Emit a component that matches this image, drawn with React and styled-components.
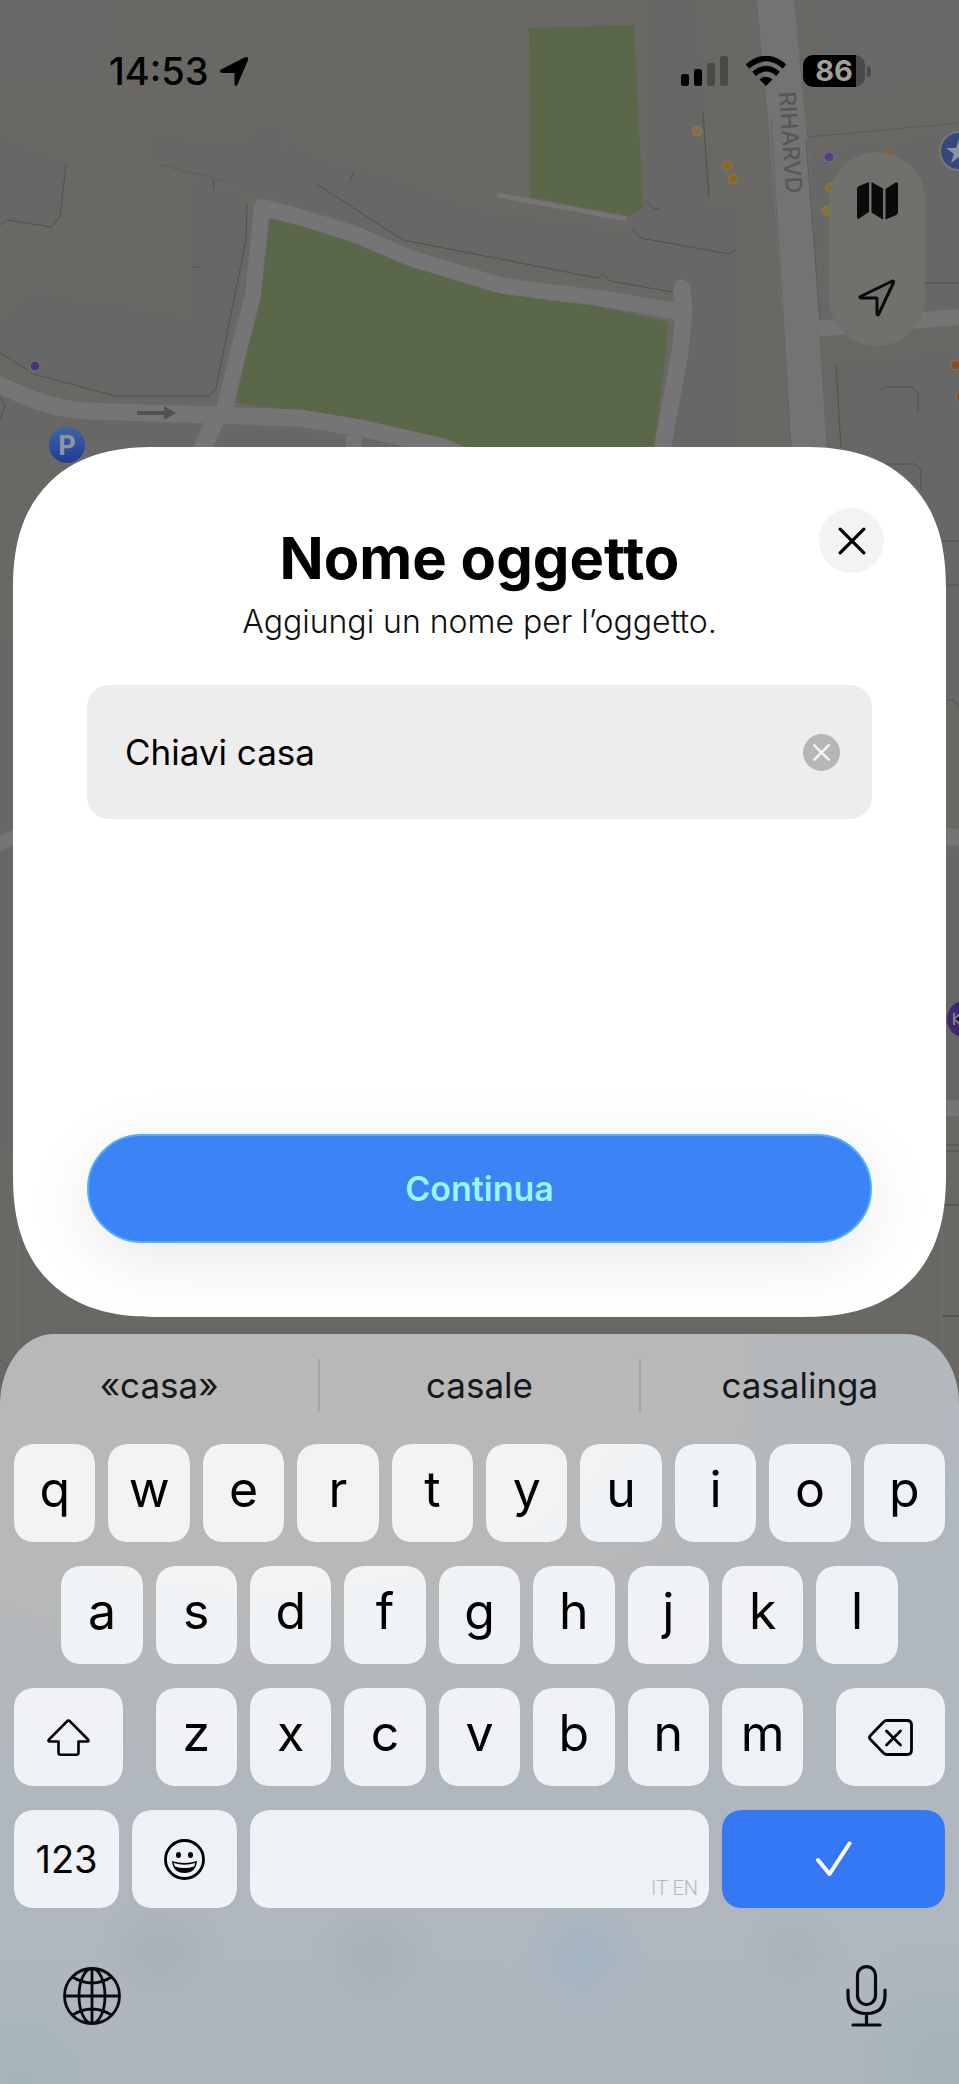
import React, { Component } from 'react';
import styled, { createGlobalStyle } from 'styled-components';

const GlobalStyle = createGlobalStyle`
  * {
    box-sizing: border-box;
  }
  body {
    margin: 0;
    background: #6a6865;
    font-family: Inter, "Liberation Sans", sans-serif;
    color: #000;
  }
  button {
    border: 0;
    padding: 0;
    background: none;
    color: inherit;
    font: inherit;
    cursor: pointer;
  }
  svg {
    display: block;
  }
`;

const Screen = styled.div`
  position: relative;
  min-height: 100vh;
  display: flex;
  flex-direction: column;
  overflow: hidden;
`;

const MapLayer = styled.svg`
  position: absolute;
  top: 0;
  left: 0;
  width: 100%;
  height: 100%;
`;

const StatusBar = styled.header`
  position: relative;
  height: 142px;
  padding: 0 88px 0 109px;
  display: flex;
  align-items: center;
  justify-content: space-between;
`;

const StatusGroup = styled.div`
  display: flex;
  align-items: center;
  gap: ${props => props.gap};
`;

const Time = styled.time`
  font-size: 38px;
  font-weight: 500;
`;

const Battery = styled.div`
  display: flex;
  align-items: center;
  gap: 2px;
`;

const BatteryBody = styled.div`
  width: 62px;
  height: 32px;
  border-radius: 10px;
  background: linear-gradient(to right, #000 86%, #4a4948 86%);
  color: #a09f9d;
  font-size: 29px;
  font-weight: 700;
  line-height: 32px;
  text-align: center;
`;

const BatteryNub = styled.div`
  width: 4px;
  height: 11px;
  border-radius: 0 4px 4px 0;
  background: #4a4948;
`;

const MapControls = styled.nav`
  position: relative;
  align-self: flex-end;
  width: 96px;
  height: 194px;
  margin: 10px 34px 0 0;
  border-radius: 48px;
  background: #72706d;
  display: flex;
  flex-direction: column;
`;

const MapButton = styled.button`
  flex: 1;
  display: flex;
  align-items: center;
  justify-content: center;
`;

const Sheet = styled.main`
  position: relative;
  margin: 101px 13px 17px;
  padding: 61px 0 74px;
  border-radius: 124px;
  background: #fff;
  overflow: hidden;

  @supports (corner-shape: squircle) {
    border-radius: 142px;
    corner-shape: superellipse(1.25);
  }
`;

const SheetHeader = styled.div`
  padding: 0 62px;
  display: grid;
  grid-template-columns: 65px 1fr 65px;
  align-items: start;
`;

const Heading = styled.div`
  grid-column: 2;
  padding-top: 15px;
  text-align: center;
`;

const Title = styled.h1`
  margin: 0;
  font-size: 58px;
  font-weight: 700;
  line-height: 70px;
`;

const Subtitle = styled.p`
  margin: 9px 0 0;
  font-size: 32px;
  font-weight: 300;
  line-height: 40px;
  color: #111;
`;

const CloseButton = styled.button`
  width: 65px;
  height: 65px;
  border-radius: 50%;
  background: #f3f3f3;
  display: flex;
  align-items: center;
  justify-content: center;
`;

const Form = styled.form`
  margin: 43px 74px 0;
  display: flex;
  flex-direction: column;
  gap: 315px;
`;

const Field = styled.div`
  height: 134px;
  padding: 0 32px 0 38px;
  border-radius: 22px;
  background: #ededed;
  display: flex;
  align-items: center;
  gap: 20px;
`;

const NameInput = styled.input`
  flex: 1;
  min-width: 0;
  border: 0;
  padding: 0;
  outline: 0;
  background: none;
  font-family: inherit;
  font-size: 35px;
  color: #000;
`;

const ClearButton = styled.button`
  width: 37px;
  height: 37px;
  border-radius: 50%;
  background: #b6b6b7;
  display: flex;
  align-items: center;
  justify-content: center;
`;

const ContinueButton = styled.button`
  height: 109px;
  border: 2px solid #52aefc;
  border-radius: 55px;
  background: #3c83f6;
  box-shadow: 0 16px 70px rgba(0, 0, 0, 0.09);
  color: #97f6fe;
  font-size: 34px;
  font-weight: 600;
`;

const Keyboard = styled.section`
  position: relative;
  flex: 1;
  border-radius: 54px 54px 0 0 / 70px 70px 0 0;
  background:
    radial-gradient(circle at 583px 625px, rgba(150, 178, 200, 0.5), transparent 60px),
    radial-gradient(circle at 160px 620px, rgba(160, 166, 177, 0.45), transparent 60px),
    radial-gradient(circle at 374px 625px, rgba(160, 166, 177, 0.45), transparent 60px),
    radial-gradient(circle at 793px 620px, rgba(163, 169, 180, 0.4), transparent 50px),
    radial-gradient(circle at 2% 100%, rgba(160, 180, 185, 0.8), transparent 110px),
    radial-gradient(circle at 98% 97%, rgba(160, 178, 184, 0.8), transparent 120px),
    radial-gradient(ellipse 720px 420px at 28% 6%, #b8b8b8 50%, transparent),
    linear-gradient(#b1b8bd, #b0b7bd 50%, #afb6c0);
`;

const Suggestions = styled.div`
  height: 110px;
  padding-bottom: 7px;
  display: flex;
  align-items: center;
`;

const Suggestion = styled.button`
  flex: 1;
  height: 53px;
  font-size: 35px;
  line-height: 53px;
  color: #17181a;

  & + & {
    border-left: 2px solid #a2a6a9;
  }
`;

const Keys = styled.div`
  padding: 0 14px;
  display: flex;
  flex-direction: column;
  gap: 24px;
`;

const KeyRow = styled.div`
  display: flex;
  justify-content: ${props => props.spread ? 'space-between' : 'center'};
  gap: 13px;
`;

const LetterGroup = styled.div`
  flex: 0 0 calc(70% - 4px);
  display: flex;
  gap: 13px;
`;

const Key = styled.button`
  height: 98px;
  border-radius: 18px;
  background: ${props => props.primary ? '#3478f6' : 'rgba(250, 253, 255, 0.85)'};
  font-size: 38px;
  display: flex;
  align-items: center;
  justify-content: center;
  flex: ${props => props.grow || '0 0 auto'};
  width: ${props => props.width || 'auto'};

  @supports (corner-shape: squircle) {
    border-radius: 22px;
    corner-shape: superellipse(1.25);
  }
`;

const LetterKey = styled(Key)`
  flex: ${props => props.grouped ? '1 1 0' : '0 0 calc((100% - 117px) / 10)'};
  padding-bottom: 8px;
  font-size: 50px;
`;

const SpaceKey = styled(Key)`
  align-items: flex-end;
  justify-content: flex-end;
  padding: 0 11px 8px;
  color: #b4b8bc;
  font-family: Roboto, sans-serif;
  font-size: 20px;
  font-weight: 300;
`;

const KeyboardFooter = styled.div`
  height: 175px;
  padding: 0 72px 0 63px;
  display: flex;
  align-items: center;
  justify-content: space-between;
`;

const suggestions = ['«casa»', 'casale', 'casalinga'];

const dots = [
  { x: 697, y: 131, color: '#8b6d42' },
  { x: 727, y: 166, color: '#8a6820' },
  { x: 733, y: 179, color: '#8a6820' },
  { x: 829, y: 157, color: '#563c8c' },
  { x: 830, y: 188, color: '#8a7422' },
  { x: 827, y: 211, color: '#8a7422' },
  { x: 888, y: 154, color: '#8a5a34' },
  { x: 956, y: 365, color: '#8a4d20' },
  { x: 961, y: 397, color: '#8a4d20' },
  { x: 35, y: 366, color: '#4c3278' },
];

const CityMap = () => (
  <MapLayer viewBox="0 0 959 2084" preserveAspectRatio="xMidYMin slice" aria-hidden="true">
    <defs>
      <linearGradient id="pin" x1="0" y1="0" x2="0" y2="1">
        <stop offset="0" stopColor="#3f66a8" />
        <stop offset="1" stopColor="#1f3a94" />
      </linearGradient>
      <filter id="soft" x="-10%" y="-10%" width="120%" height="120%">
        <feGaussianBlur stdDeviation="2" />
      </filter>
    </defs>
    <rect width="959" height="2084" fill="#6a6865" />

    {/* blocks */}
    <g fill="#676766">
      <path d="M0 0H128L112 14L108 76L0 82Z" filter="url(#soft)" />
      <path d="M0 136L66 160L58 220L52 227L7 220L0 225Z" />
      <path d="M0 318L30 290L192 316V178L248 197L246 245L235 315L216 388L210 397H115L45 378L0 352Z" />
      <path d="M150 135L245 142L258 128L286 130L283 165L275 195L263 198L150 160Z" />
      <path d="M290 140L320 160L355 165L480 210L700 240L738 260V290L733 298L670 292L480 258L405 240L300 205L275 195Z" />
      <path d="M645 0H700L709 200L699 208H655L646 200Z" />
      <path d="M632 222L640 205H736V250L730 254L640 238L632 232Z" />
      <path d="M689 290H740L742 447H664L682 370Z" />
      <path d="M818 0H959V84L828 95Z" filter="url(#soft)" />
      <path d="M812 150L959 132V306L822 319Z" />
      <path d="M836 362L959 350V700H841Z" />
      <path d="M0 400L110 424H208L196 447H0Z" />
      <path d="M228 426L300 430L344 440L346 447H215Z" />
      <path d="M0 635H30V830H0Z" />
      <path d="M0 850H30V1150H0Z" />
      <path d="M935 850H959V1100H935Z" />
    </g>

    {/* parks */}
    <g fill="#5a6749">
      <path d="M529 28L634 25L643 208L630 216L530 197Z" />
      <path d="M270 219L330 233L400 263L480 287L570 300L668 322L666 350L654 450H460L400 437L300 411L236 403L245 360L258 310Z" />
    </g>

    {/* roads */}
    <g fill="none" stroke="#757576" strokeLinejoin="round">
      <path d="M-5 383C30 399 50 408 85 411L215 415L300 418L360 428L440 446L480 462" strokeWidth="17" />
      <path d="M224 410L240 345L253 295L262 207L300 217L360 236L410 258L480 279C500 287 520 288 550 292L600 298L680 312" strokeWidth="16" />
      <path d="M682 288L684 310L680 352L662 450" strokeWidth="17" strokeLinecap="round" />
      <path d="M215 420L198 460" strokeWidth="18" />
      <path d="M354 436V450" strokeWidth="16" />
      <path d="M497 195L626 219" strokeWidth="5" />
      <path d="M815 329L959 317" strokeWidth="16" />
      <path d="M-4 845L22 834" strokeWidth="14" />
      <path d="M940 837H962" strokeWidth="17" />
      <path d="M940 1108H962" strokeWidth="16" />
    </g>
    <path d="M757 0H794L808 150L828 450H791L771 150Z" fill="#737373" />

    {/* kerbs and building edges */}
    <g fill="none" stroke="#525150" strokeWidth="1">
      <path d="M66 165L60 216L52 227L7 220L0 225" />
      <path d="M30 373L115 396H209L216 388L240 270L246 240L247 205" />
      <path d="M0 353L28 370" />
      <path d="M315 183L403 240L480 255L597 278L603 274L610 281L672 292" />
      <path d="M160 165L222 180" stroke="#5d5c5b" />
      <path d="M632 230L640 238L730 254L737 248" />
      <path d="M703 112L709 198M646 201L655 209H659" />
      <path d="M809 137L959 123M820 320L806 140" stroke="#5c5b5a" />
      <path d="M925 283H959M836 366L841 447M880 390L885 387H912L918 394V412" />
      <path d="M820 336L827 447M771 120L791 447" stroke="#646362" />
      <path d="M885 464H915L921 470V490M942 541H959" />
      <path d="M942 585H959M945 700H952L959 706M942 1145H959M942 1151H959M942 1205H959M942 1316H959" />
      <path d="M213 180L214 190M353 172L350 182M192 267H199" />
      <path d="M0 398L5 405L0 420" />
    </g>
    <path d="M137 411H164V406L176 413L164 420V415H137Z" fill="#525150" />
    <text transform="translate(779 92) rotate(86)" fontSize="23" fontWeight="500" fill="#585757" fontFamily="Inter, sans-serif">RIHARVD</text>

    {dots.map(dot => (
      <circle key={`${dot.x}-${dot.y}`} cx={dot.x} cy={dot.y} r="5" fill={dot.color} stroke="#7b7977" strokeWidth="1" />
    ))}
    <circle cx="67" cy="445" r="18" fill="url(#pin)" />
    <text x="67" y="455" fontSize="27" fontWeight="700" fill="#8f95a3" textAnchor="middle" fontFamily="Inter, sans-serif">P</text>
    <circle cx="959" cy="151" r="19" fill="#36477c" stroke="#777" strokeWidth="2" />
    <path d="M959 139L962 148H972L964 154L967 163L959 157L951 163L954 154L946 148H956Z" fill="#8e929c" />
    <circle cx="966" cy="1019" r="19" fill="#40286e" />
    <path d="M954 1013V1025M954 1019L960 1014V1024Z" stroke="#81799a" strokeWidth="2" />

    <rect x="18" y="1180" width="924" height="300" fill="#6a6865" stroke="#747371" />
    <path d="M0 1360L8 1367M942 1205H959M942 1316H959" stroke="#525150" />
  </MapLayer>
);

const LocationArrow = () => (
  <svg width="30" height="31" viewBox="0 0 30 31">
    <path d="M2 13.500L26 1.200Q30 0 29 4L18.500 28.500Q16.500 32 15.500 28V17H3.500Q-1 16 2 13.500Z" />
  </svg>
);

const Signal = () => (
  <svg width="48" height="30" viewBox="0 0 48 30">
    <rect x="0" y="18" width="8" height="12" rx="2.500" />
    <rect x="13" y="13" width="8" height="17" rx="2.500" />
    <rect x="26" y="7" width="8" height="23" rx="2.500" fill="#4a4948" />
    <rect x="39" y="0" width="8" height="30" rx="2.500" fill="#4a4948" />
  </svg>
);

const Wifi = () => (
  <svg width="42" height="30" viewBox="0 0 42 30">
    <path d="M2.500 10.500Q21 -5.500 39.500 10.500" fill="none" stroke="#000" strokeWidth="5.500" />
    <path d="M9 17.800Q21 7.500 33 17.800" fill="none" stroke="#000" strokeWidth="5.500" />
    <path d="M14.500 23.500Q21 18 27.500 23.500L21 30Z" />
  </svg>
);

const MapIcon = () => (
  <svg width="41" height="38" viewBox="0 0 41 38" fill="#0a0a0a">
    <path d="M0 7Q0 5 2 4L12 0V30L2 36.500Q0 38 0 35Z" />
    <path d="M14.500 0L26 6.500V37.500L14.500 30.500Z" />
    <path d="M28.500 7L38.500 0.500Q41 -0.500 41 2V30Q41 32 39.500 33L28.500 37.500Z" />
  </svg>
);

const NavigateIcon = () => (
  <svg width="38" height="38" viewBox="0 0 38 38" fill="none" stroke="#0a0a0a" strokeWidth="3" strokeLinejoin="round">
    <path d="M2.500 17.500L34.500 2Q36 2 35.500 3.500L20.500 35.500Q19.500 36.500 19 35V19.500Q19 19 18.500 19H3Q1 18.500 2.500 17.500Z" />
  </svg>
);

const Cross = ({ size, stroke, color }) => (
  <svg width={size} height={size} viewBox="0 0 26 26" fill="none" stroke={color} strokeWidth={stroke} strokeLinecap="round">
    <path d="M2 2L24 24M24 2L2 24" />
  </svg>
);

const ShiftIcon = () => (
  <svg width="43" height="37" viewBox="0 0 43 37" fill="none" stroke="#000" strokeWidth="2.600" strokeLinejoin="round">
    <path d="M20 2.300Q21.500 1 23 2.300L41 20.500Q42.500 22.500 40 22.500H31.500V33.500Q31.500 35.700 29.300 35.700H13.700Q11.500 35.700 11.500 33.500V22.500H3Q0.500 22.500 2 20.500Z" />
  </svg>
);

const DeleteIcon = () => (
  <svg width="45" height="37" viewBox="0 0 45 37" fill="none" stroke="#000" strokeWidth="2.800" strokeLinecap="round" strokeLinejoin="round">
    <path d="M15.500 3Q17 1.500 19 1.500H39Q43.500 1.500 43.500 6V31Q43.500 35.500 39 35.500H19Q17 35.500 15.500 34L2.500 20.500Q0.500 18.500 2.500 16.500Z" />
    <path d="M18.500 12L32.500 26M32.500 12L18.500 26" />
  </svg>
);

const SmileIcon = () => (
  <svg width="41" height="41" viewBox="0 0 41 41">
    <circle cx="20.500" cy="20.500" r="19" fill="none" stroke="#000" strokeWidth="2.800" />
    <ellipse cx="14.500" cy="16" rx="2.500" ry="3" />
    <ellipse cx="26.500" cy="16" rx="2.500" ry="3" />
    <path d="M8 22Q20.500 26 33 22Q32 34 20.500 34Q9 34 8 22Z" />
    <path d="M9.800 24Q20.500 27.300 31.200 24L30.200 27.500Q20.500 30.500 10.800 27.500Z" fill="#eff3f7" />
  </svg>
);

const CheckIcon = () => (
  <svg width="36" height="36" viewBox="0 0 36 36" fill="none" stroke="#fff" strokeWidth="4" strokeLinecap="round" strokeLinejoin="round">
    <path d="M2 19L13.500 33L33.500 2.500" />
  </svg>
);

const GlobeIcon = () => (
  <svg width="58" height="58" viewBox="0 0 58 58" fill="none" stroke="#0a0b0c" strokeWidth="2.800">
    <circle cx="29" cy="29" r="27.500" />
    <ellipse cx="29" cy="29" rx="13" ry="27.500" />
    <path d="M29 1.500V56.500M1.500 29H56.500M9.500 10Q29 22 48.500 10M9.500 48Q29 36 48.500 48" />
  </svg>
);

const MicIcon = () => (
  <svg width="41" height="62" viewBox="0 0 41 62" fill="none" stroke="#0a0b0c" strokeWidth="3.200" strokeLinecap="round">
    <rect x="11.500" y="1.600" width="18" height="38" rx="9" />
    <path d="M2 25V30Q2 48.500 20.500 48.500Q39 48.500 39 30V25M20.500 48.500V60M7 60H34" />
  </svg>
);

export default class App extends Component {

  state = { name: 'Chiavi casa' };

  onChangeHandler = (e) => {
    this.setState({ name: e.target.value });
  }

  onClearHandler = () => {
    this.setState({ name: '' });
  }

  onTypeHandler = (letter) => {
    this.setState(state => ({ name: state.name + letter }));
  }

  onDeleteHandler = () => {
    this.setState(state => ({ name: state.name.slice(0, -1) }));
  }

  renderLetters (letters, grouped) {
    return letters.split('').map(letter => (
      <LetterKey type="button" key={letter} grouped={grouped ? 1 : undefined} onClick={() => this.onTypeHandler(letter)}>
        {letter}
      </LetterKey>
    ));
  }

  render () {
    return (
      <Screen>
        <GlobalStyle />
        <CityMap />

        <StatusBar>
          <StatusGroup gap="10px">
            <Time>14:53</Time>
            <LocationArrow />
          </StatusGroup>
          <StatusGroup gap="16px">
            <Signal />
            <Wifi />
            <Battery>
              <BatteryBody>86</BatteryBody>
              <BatteryNub />
            </Battery>
          </StatusGroup>
        </StatusBar>

        <MapControls>
          <MapButton type="button" aria-label="Mappa"><MapIcon /></MapButton>
          <MapButton type="button" aria-label="Posizione"><NavigateIcon /></MapButton>
        </MapControls>

        <Sheet>
          <SheetHeader>
            <Heading>
              <Title>Nome oggetto</Title>
              <Subtitle id="name-label">Aggiungi un nome per l’oggetto.</Subtitle>
            </Heading>
            <CloseButton type="button" aria-label="Chiudi">
              <Cross size="28" stroke="3" color="#000" />
            </CloseButton>
          </SheetHeader>
          <Form onSubmit={e => e.preventDefault()}>
            <Field>
              <NameInput aria-labelledby="name-label" value={this.state.name} onChange={this.onChangeHandler} />
              <ClearButton type="button" aria-label="Cancella testo" onClick={this.onClearHandler}>
                <Cross size="17" stroke="4" color="#f4f4f4" />
              </ClearButton>
            </Field>
            <ContinueButton type="submit">Continua</ContinueButton>
          </Form>
        </Sheet>

        <Keyboard>
          <Suggestions>
            {suggestions.map(word => <Suggestion type="button" key={word}>{word}</Suggestion>)}
          </Suggestions>
          <Keys>
            <KeyRow>{this.renderLetters('qwertyuiop')}</KeyRow>
            <KeyRow>{this.renderLetters('asdfghjkl')}</KeyRow>
            <KeyRow spread={1}>
              <Key type="button" width="109px" aria-label="Maiuscole"><ShiftIcon /></Key>
              <LetterGroup>{this.renderLetters('zxcvbnm', true)}</LetterGroup>
              <Key type="button" width="109px" aria-label="Elimina" onClick={this.onDeleteHandler}><DeleteIcon /></Key>
            </KeyRow>
            <KeyRow>
              <Key type="button" width="105px">123</Key>
              <Key type="button" width="105px" aria-label="Emoji"><SmileIcon /></Key>
              <SpaceKey type="button" grow="1" onClick={() => this.onTypeHandler(' ')}>IT EN</SpaceKey>
              <Key type="button" width="223px" primary={1} aria-label="Conferma"><CheckIcon /></Key>
            </KeyRow>
          </Keys>
          <KeyboardFooter>
            <button type="button" aria-label="Cambia tastiera"><GlobeIcon /></button>
            <button type="button" aria-label="Dettatura"><MicIcon /></button>
          </KeyboardFooter>
        </Keyboard>
      </Screen>
    );
  }
}
